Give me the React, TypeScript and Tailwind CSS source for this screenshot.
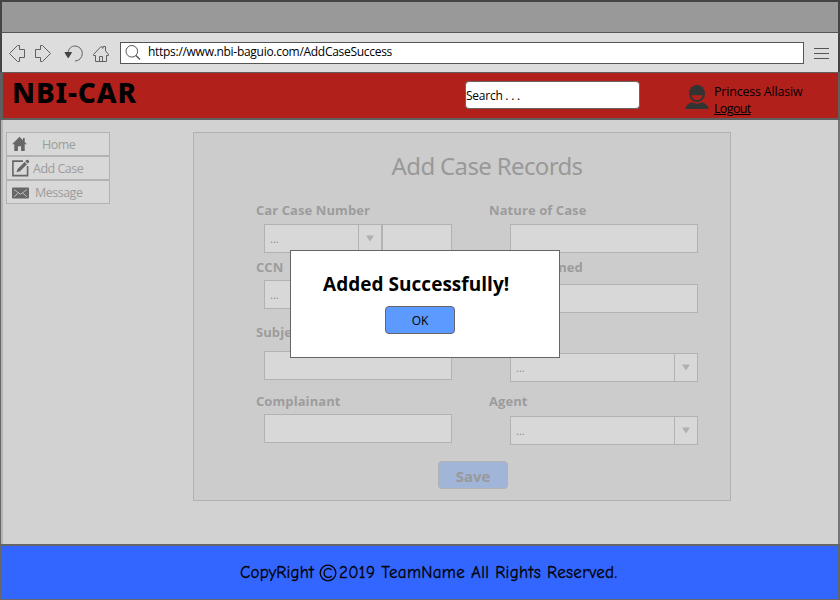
import React from "react";

const Caret = () => (
  <svg width="10" height="7" viewBox="0 0 10 7" className="block">
    <path d="M1 0.5H9L5 6.5Z" fill="#b0b0b0" />
  </svg>
);

function Field({ className }: { className: string }) {
  return <div className={`h-[29px] shrink-0 border border-[#b2b2b2] bg-[#d8d8d8] ${className}`} />;
}

function Select({ className }: { className: string }) {
  return (
    <div className={`flex h-[29px] shrink-0 border border-[#b2b2b2] bg-[#d8d8d8] text-[#8c8c8c] ${className}`}>
      <span className="flex-1 pl-[5px] pt-[6px] text-[11px] leading-[16px]">...</span>
      <span className="flex w-[23px] justify-center border-l border-[#b2b2b2] pt-[10px]">
        <Caret />
      </span>
    </div>
  );
}

function Label({ children, className }: { children: React.ReactNode; className: string }) {
  return <div className={`h-5 shrink-0 whitespace-nowrap text-[13px] font-bold leading-5 tracking-[0.08px] text-[#9c9c9c] ${className}`}>{children}</div>;
}

function BrowserIcons() {
  return (
    <svg width="104" height="22" viewBox="0 0 104 22" fill="none" stroke="#606060" strokeWidth="1" className="block">
      <path d="M2.5 11.5L10.5 3.5H12.5V7.5H17.5V15.5H12.5V19.5H10.5Z" />
      <path d="M43.5 11.5L35.5 3.5H33.5V7.5H28.5V15.5H33.5V19.5H35.5Z" />
      <path d="M61 10.8C61.5 6.5 64.5 4 68 4A7.3 7.5 0 0 1 68 19" />
      <path d="M58 10.5H64.5L61.2 15.8Z" fill="#444" stroke="#444" />
      <path d="M86.5 12.5L94 4.5L96 6.3V4.5H98.5V8.8L101.5 12.5V13.5H99.5V19.5H88.5V13.5H86.5ZM92.5 19.5V14.5H95.5V19.5" />
    </svg>
  );
}

function NavHome() {
  return (
    <svg width="16" height="16" viewBox="0 0 16 16" className="block" fill="#666">
      <path d="M7.5 .8L11 4.3V2H12.7V6L14.9 8.2H12.7V15H9.1V10.2H5.9V15H2.3V8.2H.1Z" />
    </svg>
  );
}

function NavEdit() {
  return (
    <svg width="18" height="18" viewBox="0 0 18 18" className="block" fill="none">
      <path d="M11 2.1H.9V16.6H15.6V7" stroke="#666" strokeWidth="1.6" />
      <path d="M4.5 13.3L5.6 9.9L12.6 2.9L15 5.3L8 12.3ZM13.3 2.2L14.4 1.1Q15.3.2 16.2 1.1L16.8 1.7Q17.6 2.6 16.8 3.5L15.7 4.6Z" fill="#666" />
    </svg>
  );
}

function NavMail() {
  return (
    <svg width="18" height="12" viewBox="0 0 18 12" className="block">
      <rect x="0" y=".5" width="17" height="11" rx="1" fill="#666" />
      <path d="M2 2.5L8.5 7.3L15 2.5M2 9.8L6.3 6M15 9.8L10.7 6" stroke="#c6c6c6" strokeWidth=".9" fill="none" />
    </svg>
  );
}

function Avatar() {
  return (
    <svg width="24" height="26" viewBox="0 0 24 26" className="block" fill="#333">
      <ellipse cx="12" cy="9.4" rx="8" ry="8.6" />
      <path d="M6.6 11.2H17.4Q16.6 16 12 16Q7.4 16 6.6 11.2Z" fill="#b2201c" />
      <path d="M.3 25Q1 20.2 6.5 18.2Q12 20.8 17.5 18.2Q23 20.2 23.7 25Z" />
    </svg>
  );
}

export default function App() {
  return (
    <div className="relative flex h-[600px] w-[840px] flex-col overflow-hidden bg-[#d2d2d2] font-['Segoe_UI','Open_Sans',sans-serif] text-black">
      <div className="h-[33px] shrink-0 border-x-2 border-b border-t-2 border-x-[#444] border-b-[#555] border-t-[#444] bg-[#999]" />
      <div className="flex h-[39px] shrink-0 items-start border-x-2 border-[#444] bg-[#ddd]">
        <div className="ml-[5px] mt-[9px] h-[22px] w-[104px]">
          <BrowserIcons />
        </div>
        <div className="ml-[9px] mt-[9px] flex h-[22px] w-[684px] items-center border border-[#555] bg-white">
          <svg width="18" height="18" viewBox="0 0 18 18" className="ml-[3px] block" fill="none" stroke="#555">
            <circle cx="7.8" cy="7.3" r="5.8" />
            <path d="M11.9 11.4L16 15.5" strokeWidth="1.4" />
          </svg>
          <span className="-mt-[2px] ml-[6px] whitespace-nowrap text-[12px] tracking-[-0.29px]">https://www.nbi-baguio.com/AddCaseSuccess</span>
        </div>
        <div className="ml-[10px] mt-[15px] flex w-[15px] flex-col gap-[4px]">
          <div className="h-px bg-[#555]" />
          <div className="h-px bg-[#555]" />
          <div className="h-px bg-[#555]" />
        </div>
      </div>
      <header className="flex h-[48px] shrink-0 items-start border-b-2 border-l-[3px] border-r-2 border-t border-[#5f5f5f] bg-[#b2201c]">
        <div className="ml-[9px] mt-[2px] w-[140px] whitespace-nowrap font-['Tahoma','Noto_Sans'] text-[28px] font-extrabold leading-[34px] tracking-[0.9px]">NBI-CAR</div>
        <div className="ml-[313px] mt-[8px] flex h-[28px] w-[175px] items-center rounded-[4px] border border-[#666] bg-white pt-px text-[12px] tracking-[-0.25px]">Search . . .</div>
        <div className="ml-[45px] mt-[11px]">
          <Avatar />
        </div>
        <div className="ml-[5px] mt-[10px] whitespace-nowrap text-[12.5px] leading-[17px] tracking-[-0.2px]">
          <div>Princess Allasiw</div>
          <div className="w-fit underline tracking-[-0.65px]">Logout</div>
        </div>
      </header>
      <main className="flex h-[424px] shrink-0 items-start border-l border-r-2 border-l-[#666] border-r-[#777]">
        <div className="h-full w-[2px] bg-[#b5b5b5]" />
        <nav className="ml-[3px] mt-[12px] w-[104px] border border-b-0 border-[#b2b2b2] bg-[#d8d8d8] text-[12.5px] tracking-[-0.5px] text-[#9c9c9c]">
          <div className="flex h-[24px] items-center border-b-2 border-[#b2b2b2]">
            <div className="ml-[5px] w-[30px]"><NavHome /></div>
            <span className="pt-[2px]">Home</span>
          </div>
          <div className="flex h-[24px] items-center border-b-2 border-[#b2b2b2]">
            <div className="ml-[5px] w-[21px]"><NavEdit /></div>
            <span className="pt-[2px]">Add Case</span>
          </div>
          <div className="flex h-[23px] items-center border-b border-[#b2b2b2]">
            <div className="ml-[5px] w-[23px] pt-px"><NavMail /></div>
            <span className="pt-[2px]">Message</span>
          </div>
        </nav>
        <section className="ml-[83px] mt-[12px] h-[369px] w-[538px] border border-[#b2b2b2] bg-[#ccc]">
          <h1 className="ml-[50px] h-[67px] text-center font-['Tahoma','Noto_Sans'] text-[24px] leading-[66px] tracking-[-0.65px] text-[#999]">Add Case Records</h1>
          <div className="ml-[62px] flex h-[261px] gap-[37px]">
            <div className="flex w-[196px] flex-col">
              <Label className="">Car Case Number</Label>
              <div className="mt-1 flex pl-2">
                <Select className="w-[118px]" />
                <Field className="w-[70px]" />
              </div>
              <Label className="mt-1">CCN</Label>
              <Select className="ml-auto mt-[3px] w-[188px]" />
              <Label className="mt-[13px]">Subject</Label>
              <Field className="ml-auto mt-[9px] w-[188px]" />
              <Label className="mt-[11px]">Complainant</Label>
              <Field className="ml-auto mt-[3px] w-[188px]" />
            </div>
            <div className="flex w-[209px] flex-col">
              <Label className="">Nature of Case</Label>
              <Field className="ml-auto mt-1 w-[188px]" />
              <Label className="mt-1 pl-px">Date Assigned</Label>
              <Field className="ml-auto mt-[7px] w-[188px]" />
              <Label className="mt-[9px]">Status</Label>
              <Select className="ml-auto mt-[11px] w-[188px]" />
              <Label className="mt-[9px]">Agent</Label>
              <Select className="ml-auto mt-[5px] w-[188px]" />
            </div>
          </div>
          <div className="ml-[244px] flex h-[28px] w-[70px] items-center justify-center rounded-[4px] border border-[#b2b2b2] bg-[#a1b5d8] pt-[2px] text-[15px] font-bold text-[#999]">Save</div>
        </section>
      </main>
      <footer className="flex h-[56px] shrink-0 items-center border-b border-l border-r-2 border-t-2 border-[#666] bg-[#36f] pl-[239px] font-['Comic_Sans_MS','Comic_Neue',Lato,sans-serif] text-[17px] [-webkit-text-stroke:0.3px_#000]">
        <span className="w-[79px] whitespace-nowrap tracking-[0.1px]">CopyRight</span>
        <svg width="18" height="18" viewBox="0 0 18 18" className="block" fill="none" stroke="#000" strokeWidth="1.3">
          <circle cx="9" cy="9" r="7.8" />
          <path d="M12.6 5.9Q10.8 4.2 8.6 4.6Q5.2 5.4 5.1 9Q5.2 12.8 8.6 13.4Q10.8 13.8 12.7 12.1" />
        </svg>
        <span className="ml-[2px] whitespace-nowrap tracking-[0.3px]">2019 TeamName All Rights Reserved.</span>
      </footer>
      <div role="dialog" className="absolute left-[290px] top-[250px] flex h-[108px] w-[270px] flex-col border border-[#666] bg-white">
        <div className="ml-[32px] mt-[20px] whitespace-nowrap text-[19px] font-bold leading-[26px] tracking-[0.03px]">Added Successfully!</div>
        <button className="ml-[94px] mt-[9px] h-[28px] w-[70px] rounded-[4px] border border-[#666] bg-[#5c9aff] pt-[2px] text-[12px]">OK</button>
      </div>
    </div>
  );
}
